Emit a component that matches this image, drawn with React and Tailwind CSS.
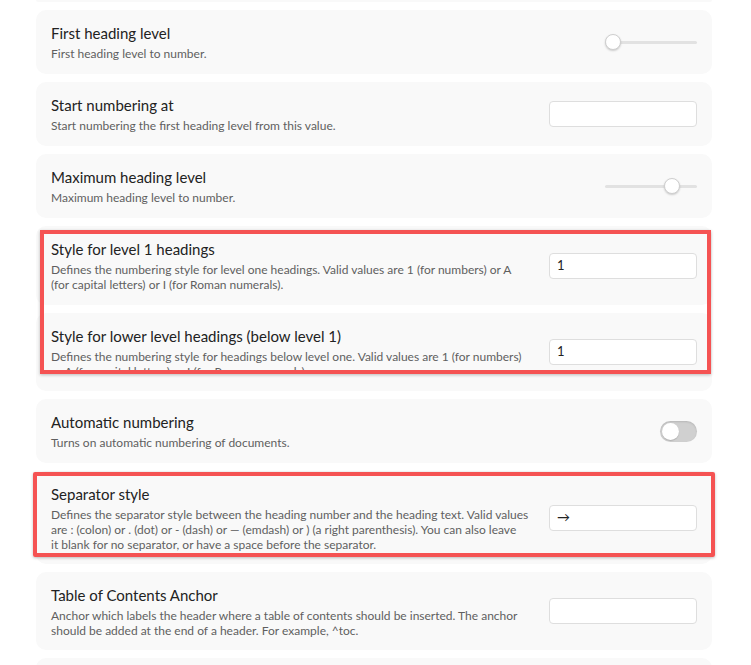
import React from "react";

const Slider = ({ pos }) => (
  <div className="relative w-[92px] h-[18px] flex items-center">
    <div className="h-[3px] w-full rounded-full bg-[#e2e2e2]" />
    <div
      className="absolute top-[1px] w-[16px] h-[16px] rounded-full bg-white border border-[#cfcfcf] shadow-[0_1px_2px_rgba(0,0,0,0.18)]"
      style={{ left: pos }}
    />
  </div>
);

const TextInput = ({ value }) => (
  <div className="w-[148px] h-[26px] rounded-[4px] border border-[#dedede] bg-white flex items-center px-[7px] text-[13px] text-[#222]">
    {value}
  </div>
);

const Toggle = () => (
  <div className="w-[37px] h-[21px] rounded-full bg-[#d0d0d0] shadow-[inset_0_1px_2px_rgba(0,0,0,0.12)] flex items-center px-[2px]">
    <div className="w-[17px] h-[17px] rounded-full bg-white shadow-[0_1px_1px_rgba(0,0,0,0.15)]" />
  </div>
);

// lines are split as in the reference so the wrapping stays the same
const Setting = ({ title, lines, control, height, clipDesc }) => (
  <div
    className="flex items-center shrink-0 rounded-[10px] bg-[#f9f9f9] px-[15px]"
    style={{ height }}
  >
    <div className="flex-1 mr-[16px] self-start pt-[13px]">
      <div className="text-[15px] leading-[21px] text-[#222]">{title}</div>
      <div
        className={
          clipDesc
            ? "mt-[2px] text-[12px] leading-[15px] text-[#5f5f5f] max-h-[25px] overflow-hidden"
            : "mt-[2px] text-[12px] leading-[15px] text-[#5f5f5f]"
        }
      >
        {lines.map((l) => (
          <div key={l} className="whitespace-nowrap">
            {l}
          </div>
        ))}
      </div>
    </div>
    <div className="flex justify-end">{control}</div>
  </div>
);

export default function App() {
  return (
    <div
      className="h-[665px] bg-white pl-[36px] pr-[39px] flex flex-col gap-[8px] overflow-hidden"
      style={{ fontFamily: "Lato, 'Open Sans', sans-serif" }}
    >
      <div className="h-[2px] rounded-b-[10px] bg-[#f9f9f9] shrink-0" />

      <Setting
        height={64}
        title="First heading level"
        lines={["First heading level to number."]}
        control={<Slider pos={0} />}
      />
      <Setting
        height={64}
        title="Start numbering at"
        lines={["Start numbering the first heading level from this value."]}
        control={<TextInput value="" />}
      />
      <Setting
        height={64}
        title="Maximum heading level"
        lines={["Maximum heading level to number."]}
        control={<Slider pos={59} />}
      />

      <div className="relative flex flex-col gap-[8px] shrink-0">
        <Setting
          height={79}
          title="Style for level 1 headings"
          lines={[
            "Defines the numbering style for level one headings. Valid values are 1 (for numbers) or A",
            "(for capital letters) or I (for Roman numerals).",
          ]}
          control={<TextInput value="1" />}
        />
        <Setting
          height={78}
          title="Style for lower level headings (below level 1)"
          lines={[
            "Defines the numbering style for headings below level one. Valid values are 1 (for numbers)",
            "or A (for capital letters) or I (for Roman numerals).",
          ]}
          control={<TextInput value="1" />}
          clipDesc
        />
        <div className="absolute top-[4px] left-[4px] right-[1px] h-[144px] border-[4px] border-[#f55353] shadow-[0_1px_3px_rgba(0,0,0,0.25)] pointer-events-none" />
      </div>

      <Setting
        height={64}
        title="Automatic numbering"
        lines={["Turns on automatic numbering of documents."]}
        control={<Toggle />}
      />

      <div className="relative shrink-0">
        <Setting
          height={93}
          title="Separator style"
          lines={[
            "Defines the separator style between the heading number and the heading text. Valid values",
            "are : (colon) or . (dot) or - (dash) or — (emdash) or ) (a right parenthesis). You can also leave",
            "it blank for no separator, or have a space before the separator.",
          ]}
          control={<TextInput value="→" />}
        />
        <div className="absolute top-[1px] left-[-3px] right-[-3px] h-[85px] border-[4px] border-[#f55353] rounded-[2px] shadow-[0_1px_3px_rgba(0,0,0,0.25)] pointer-events-none" />
      </div>

      <Setting
        height={78}
        title="Table of Contents Anchor"
        lines={[
          "Anchor which labels the header where a table of contents should be inserted. The anchor",
          "should be added at the end of a header. For example, ^toc.",
        ]}
        control={<TextInput value="" />}
      />

      <div className="h-[60px] rounded-[10px] bg-[#f9f9f9] shrink-0" />
    </div>
  );
}
